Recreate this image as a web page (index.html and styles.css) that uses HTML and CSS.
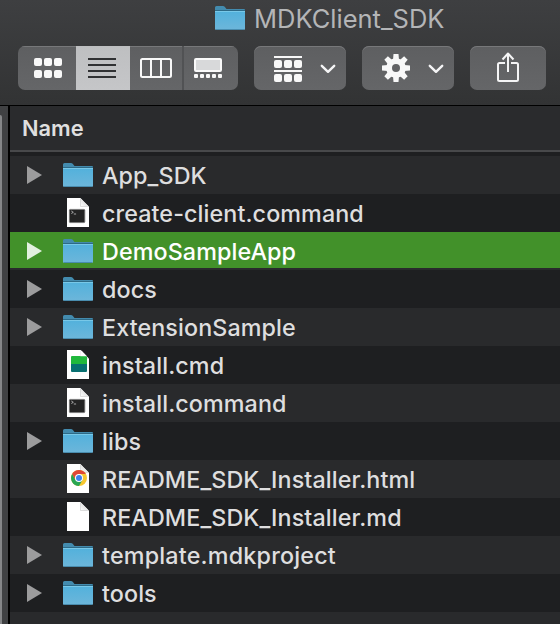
FILE: index.html
```
<!DOCTYPE html>
<html lang="en">
<head>
<meta charset="utf-8">
<title>MDKClient_SDK</title>
<link rel="stylesheet" href="styles.css">
</head>
<body>
<svg class="defs" width="0" height="0" aria-hidden="true">
  <defs>
    <linearGradient id="face" x1="0" y1="0" x2="0" y2="1"><stop offset="0" stop-color="#52b1dc"/><stop offset="1" stop-color="#6db6da"/></linearGradient>
    <linearGradient id="fold" x1="0" y1="1" x2="1" y2="0"><stop offset="0" stop-color="#fff"/><stop offset="1" stop-color="#c8c8c8"/></linearGradient>
    <symbol id="folder" viewBox="0 0 30 24">
      <path fill="#438bae" d="M0 1.5Q0 0 1.5 0H8q1 0 1.700.8L11.500 3H29q1 0 1 1v5H0z"/>
      <path fill="url(#face)" d="M0 5h30v17.500q0 1.500-1.500 1.500h-27Q0 24 0 22.500z"/>
      <path fill="#2d6a87" d="M0 4h30v1H0z"/>
      <path fill="#78c8e8" d="M0 5h30v1H0z"/>
      <path fill="#4182a3" d="M1 23.200h28v.8H1z"/>
    </symbol>
    <symbol id="page" viewBox="0 0 22 29">
      <path fill="#fff" d="M0 0h13.300L22 8.700V29H0z"/>
      <path fill="url(#fold)" d="M13.300 0 22 8.700h-8.700z"/>
      <path fill="none" stroke="#d0d0d0" stroke-width=".7" d="M13.500 1v7.500h7"/>
    </symbol>
    <symbol id="terminal" viewBox="0 0 22 29">
      <use href="#page"/>
      <rect x="2.400" y="11.400" width="15.400" height="13.200" rx=".8" fill="#242424" stroke="#757575" stroke-width=".8"/>
      <path fill="none" stroke="#c8c8c8" stroke-width=".8" d="m4.300 13 2 1.300-2 1.200M6.800 16h2.300"/>
    </symbol>
    <symbol id="triangle" viewBox="0 0 15 18"><path fill="currentColor" d="M0 0v18l15-9z"/></symbol>
    <symbol id="chevron" viewBox="0 0 16 10"><path fill="none" stroke="#f5f5f6" stroke-width="2.400" stroke-linecap="round" stroke-linejoin="round" d="m1.800 1.800 6.200 6 6.200-6"/></symbol>
  </defs>
</svg>
<div class="window">
  <header class="chrome">
    <div class="title"><svg class="folder"><use href="#folder"/></svg><span>MDKClient_SDK</span></div>
    <div class="toolbar">
      <div class="segments">
        <button class="seg seg-icons" aria-label="Icons"><svg width="28" height="20" fill="#f8f8f8"><rect width="8" height="8" rx="2"/><rect x="10" width="8" height="8" rx="2"/><rect x="20" width="8" height="8" rx="2"/><rect y="12" width="8" height="8" rx="2"/><rect x="10" y="12" width="8" height="8" rx="2"/><rect x="20" y="12" width="8" height="8" rx="2"/></svg></button>
        <button class="seg seg-list" aria-label="List"><svg width="28" height="20" fill="#303133"><path d="M0 0h28v2H0zM0 6h28v2H0zM0 12h28v2H0zM0 18h28v2H0z"/></svg></button>
        <button class="seg seg-columns" aria-label="Columns"><svg width="32" height="20" fill="none" stroke="#f8f8f8" stroke-width="2"><rect x="1" y="1" width="30" height="18" rx="1.500"/><path d="M11 1v18M21 1v18"/></svg></button>
        <button class="seg seg-gallery" aria-label="Gallery"><svg width="28" height="20"><rect x="1" y="1" width="26" height="12" rx="1" fill="#d8d9da" stroke="#fafafa" stroke-width="2"/><g fill="#f8f8f8"><rect y="16" width="4" height="4" rx="1"/><rect x="6" y="16" width="4" height="4" rx="1"/><rect x="12" y="16" width="4" height="4" rx="1"/><rect x="18" y="16" width="4" height="4" rx="1"/><rect x="24" y="16" width="4" height="4" rx="1"/></g></svg></button>
      </div>
      <button class="tool group" aria-label="Group"><svg class="group-icon" width="28" height="26" fill="#f8f8f8"><path d="M0 0h28v2H0zM0 14h28v2H0z"/><rect y="4" width="8" height="8" rx="2"/><rect x="10" y="4" width="8" height="8" rx="2"/><rect x="20" y="4" width="8" height="8" rx="2"/><rect y="18" width="8" height="8" rx="2"/><rect x="10" y="18" width="8" height="8" rx="2"/><rect x="20" y="18" width="8" height="8" rx="2"/></svg><svg class="chevron"><use href="#chevron"/></svg></button>
      <button class="tool action" aria-label="Action"><svg width="28" height="28" viewBox="-14 -14 28 28"><g fill="#f8f8f8"><g id="teeth"><path id="tooth" d="M-3-8l.5-6h5l.5 6v16l-.5 6h-5l-.5-6z"/><use href="#tooth" transform="rotate(90)"/></g><use href="#teeth" transform="rotate(45)"/><circle r="9.800"/></g><circle r="4" fill="#626365"/></svg><svg class="chevron"><use href="#chevron"/></svg></button>
      <button class="tool share" aria-label="Share"><svg width="22" height="30" fill="none" stroke="#f5f5f6" stroke-width="2" stroke-linejoin="round"><path d="M8 11H2.500Q1 11 1 12.500v15Q1 29 2.500 29h17q1.500 0 1.500-1.500v-15Q21 11 19.500 11H14M11 20V1.500M5.500 7.500 11 1.500l5.500 6"/></svg></button>
    </div>
  </header>
  <div class="body">
    <div class="gutter"><div class="scroller"></div></div>
    <main class="list">
      <div class="column-head">Name</div>
      <div class="row"><svg class="tri"><use href="#triangle"/></svg><svg class="folder"><use href="#folder"/></svg><span>App_SDK</span></div>
      <div class="row"><svg class="file"><use href="#terminal"/></svg><span>create-client.command</span></div>
      <div class="row selected"><svg class="tri"><use href="#triangle"/></svg><svg class="folder"><use href="#folder"/></svg><span>DemoSampleApp</span></div>
      <div class="row"><svg class="tri"><use href="#triangle"/></svg><svg class="folder"><use href="#folder"/></svg><span>docs</span></div>
      <div class="row"><svg class="tri"><use href="#triangle"/></svg><svg class="folder"><use href="#folder"/></svg><span>ExtensionSample</span></div>
      <div class="row"><svg class="file" viewBox="0 0 22 29"><use href="#page"/><path fill="#20b83c" d="M4 7q0-1 1-1h14q1 0 1 1v7H4z"/><path fill="#087071" d="M4 14h16v7q0 1-1 1H5q-1 0-1-1z"/><path fill="#fff" d="M13.300 0v6.300H20L15 1z" opacity=".9"/></svg><span>install.cmd</span></div>
      <div class="row"><svg class="file"><use href="#terminal"/></svg><span>install.command</span></div>
      <div class="row"><svg class="tri"><use href="#triangle"/></svg><svg class="folder"><use href="#folder"/></svg><span>libs</span></div>
      <div class="row"><svg class="file" viewBox="0 0 22 29"><use href="#page"/><g transform="translate(12 14)"><circle r="8" fill="#f7c72f"/><path fill="#df4837" d="M-6.900-4A8 8 0 0 1 6.900-4H0l-3.500 6z"/><path fill="#28a653" d="M-6.900-4A8 8 0 0 0 0 8l3.500-6H-3.500z"/><circle r="4" fill="#fff"/><circle r="3" fill="#3f82ed"/></g></svg><span>README_SDK_Installer.html</span></div>
      <div class="row"><svg class="file"><use href="#page"/></svg><span>README_SDK_Installer.md</span></div>
      <div class="row"><svg class="tri"><use href="#triangle"/></svg><svg class="folder"><use href="#folder"/></svg><span class="wide">template.mdkproject</span></div>
      <div class="row"><svg class="tri"><use href="#triangle"/></svg><svg class="folder"><use href="#folder"/></svg><span>tools</span></div>
      <div class="row"></div>
    </main>
  </div>
</div>
</body>
</html>
```
FILE: styles.css
```
* { box-sizing: border-box; }
body { margin: 0; background: #1e1f21; font-family: Inter, "Liberation Sans", sans-serif; }
svg { display: block; flex: none; }
.defs { position: absolute; }
.window { width: 560px; height: 624px; overflow: hidden; display: flex; flex-direction: column; }
.chrome { height: 106px; flex: none; background: linear-gradient(#3e3f41, #323334); border-bottom: 1px solid #000; }
.title { height: 46px; padding-left: 215px; display: flex; align-items: flex-start; gap: 9px; color: #b4b5b7; font-size: 25.5px; line-height: 38px; white-space: nowrap; }
.title .folder { margin-top: 6px; }
.folder { width: 30px; height: 24px; }
.toolbar { display: flex; padding-left: 18px; gap: 16px; }
button { border: 0; padding: 0; margin: 0; display: flex; align-items: center; justify-content: center; background: linear-gradient(#5e5f61, #656668); height: 44px; box-shadow: inset 0 1px #77787a; }
.segments { display: flex; width: 220px; border-radius: 7px; overflow: hidden; }
.seg-icons { width: 58px; padding-left: 2px; }
.seg-list { width: 54px; padding-right: 2px; background: linear-gradient(#bebfc1, #c5c6c8); box-shadow: none; }
.seg-columns { width: 54px; border-right: 2px solid #515254; }
.seg-gallery { width: 54px; padding-right: 6px; }
.tool { border-radius: 7px; }
.group, .action { width: 92px; justify-content: flex-start; padding-left: 20px; gap: 18px; }
.group-icon { margin-top: 2px; }
.chevron { width: 16px; height: 10px; margin-top: 1px; }
.share { width: 76px; padding-bottom: 2px; }
.body { flex: 1; display: flex; min-height: 0; }
.gutter { width: 10px; border-right: 2px solid #000; background: #404143; padding-top: 9px; }
.scroller { width: 2px; height: 509px; background: #858688; border-top-right-radius: 2px; }
.list { flex: 1; background: #1e1f21; }
.column-head { height: 46px; margin-bottom: 4px; padding-left: 12px; border-bottom: 2px solid #48494b; background: #2a2b2d; color: #dfdfdf; font-size: 21.8px; font-weight: 600; line-height: 44px; }
.row { height: 38px; display: flex; align-items: center; color: #dededf; font-size: 23.3px; font-weight: 500; letter-spacing: .1px; line-height: 36px; white-space: pre; }
.row:nth-child(even) { background: #292a2c; }
.row span { padding-top: 2px; }
.row .wide { letter-spacing: .2px; }
.row.selected { background: #42912a; border-bottom: 2px solid #292a2c; color: #fff; }
.row.selected .tri { color: #e2f0df; margin-top: 2px; }
.row.selected .folder { margin-top: 2px; }
.row.selected span { padding-top: 4px; }
.tri { width: 15px; height: 18px; margin-left: 17px; color: #9c9c9d; }
.row .folder { margin-left: 21px; margin-right: 9px; }
.file { width: 22px; height: 29px; margin: 0 13px 1px 57px; }
```
